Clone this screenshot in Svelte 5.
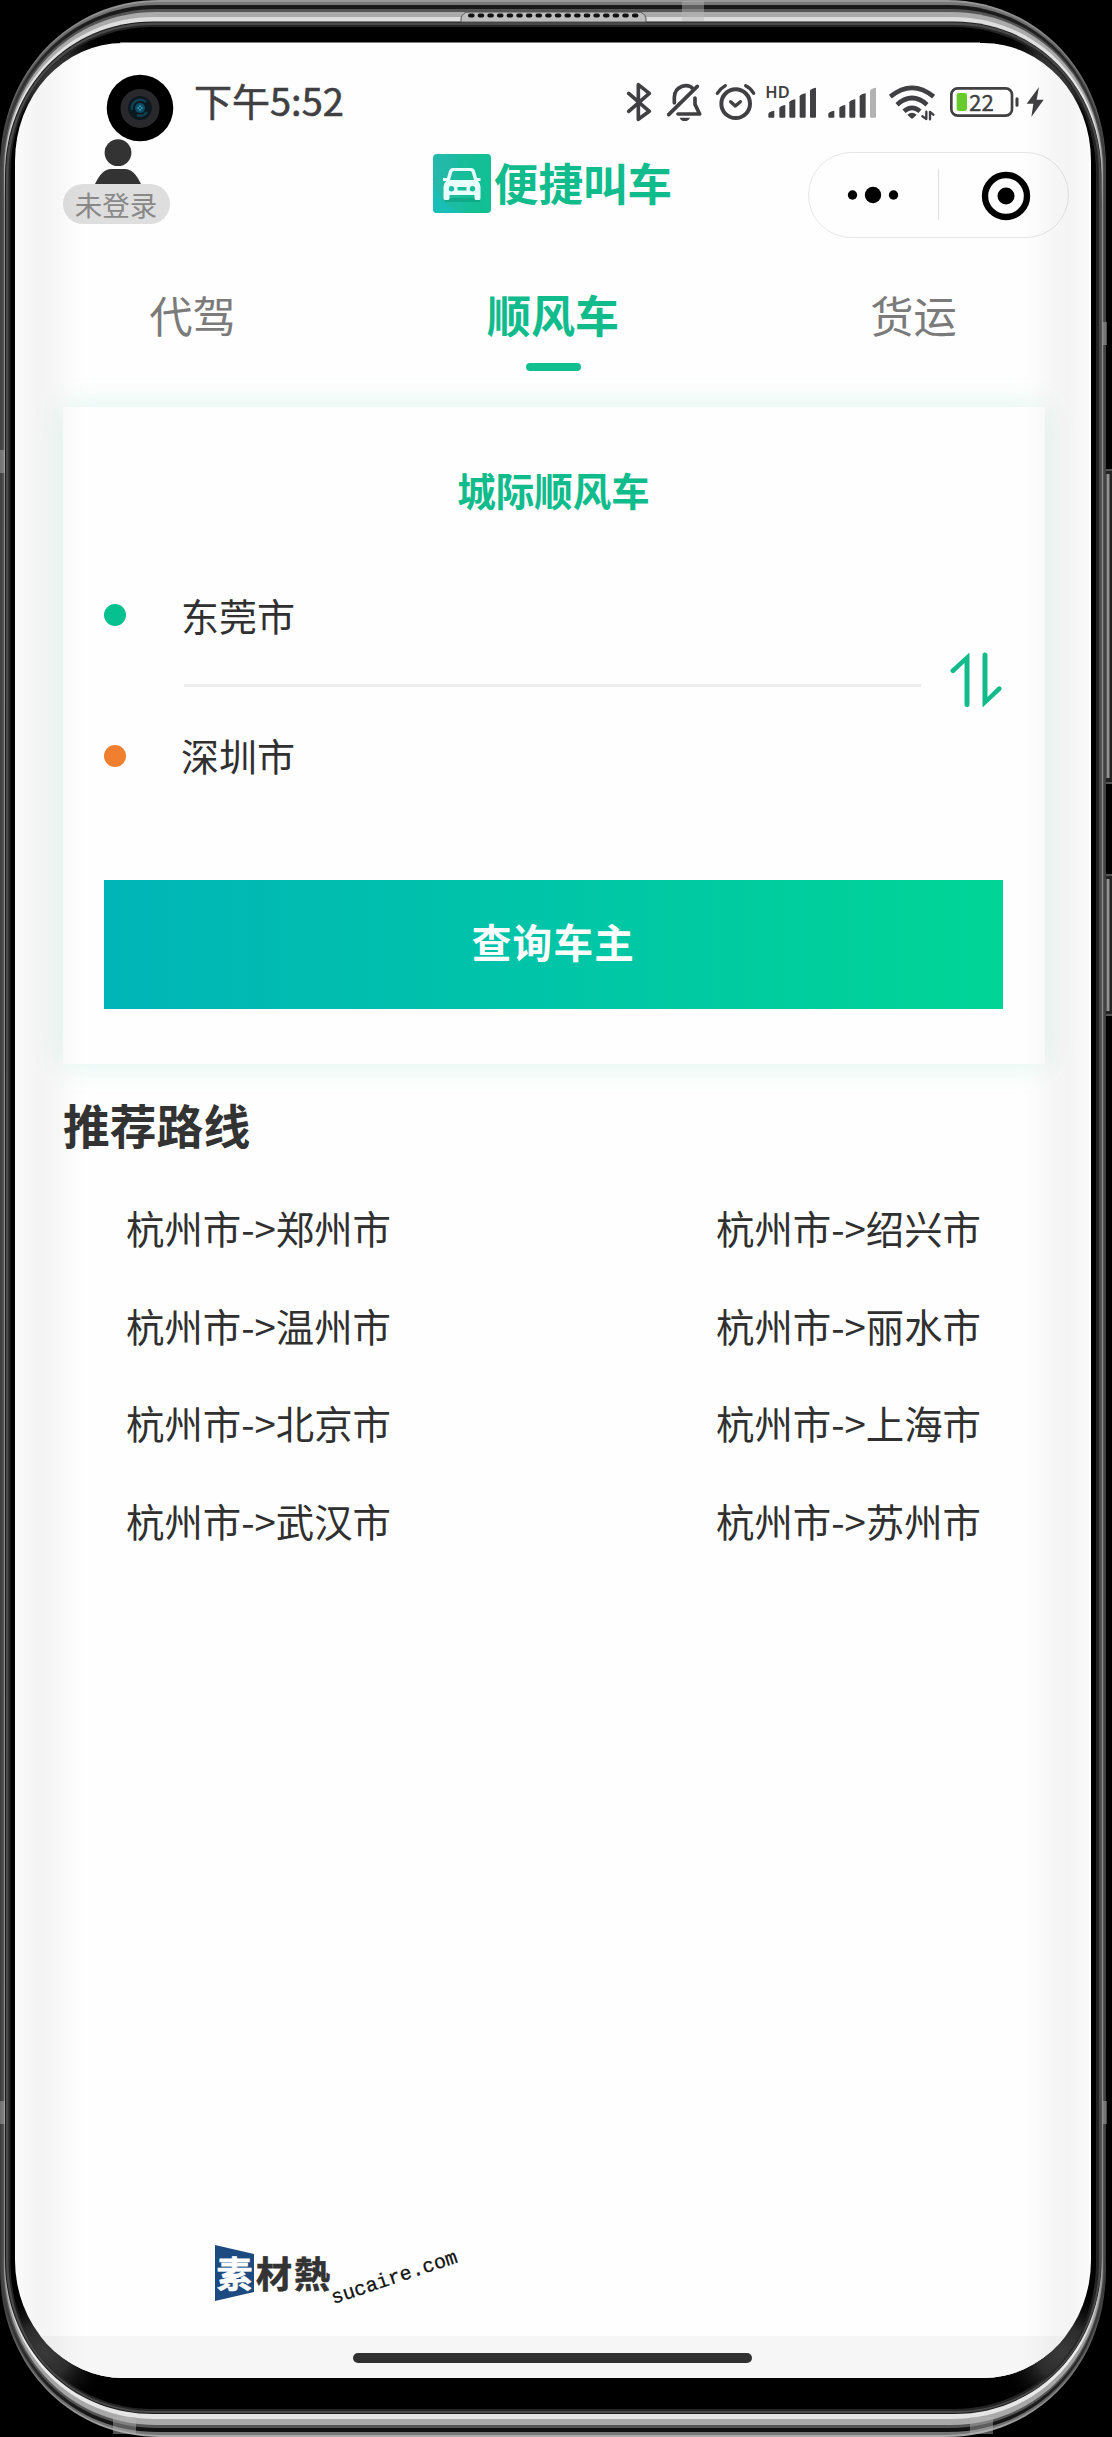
<script>
  const tabs = ['代驾', '顺风车', '货运'];
  let active = $state(1);
  let from = $state('东莞市');
  let to = $state('深圳市');
  const routes = ['郑州市', '绍兴市', '温州市', '丽水市', '北京市', '上海市', '武汉市', '苏州市'];

  function swap() {
    [from, to] = [to, from];
  }

  // Rounded outline with slightly squared-off elliptical corners.
  function shell(x0, y0, x1, y1, rx, ry) {
    const k = 0.43;
    return `M${x0 + rx} ${y0}H${x1 - rx}C${x1 - rx * k} ${y0} ${x1} ${y0 + ry * k} ${x1} ${y0 + ry}V${y1 - ry}` +
      `C${x1} ${y1 - ry * k} ${x1 - rx * k} ${y1} ${x1 - rx} ${y1}H${x0 + rx}` +
      `C${x0 + rx * k} ${y1} ${x0} ${y1 - ry * k} ${x0} ${y1 - ry}V${y0 + ry}C${x0} ${y0 + ry * k} ${x0 + rx * k} ${y0} ${x0 + rx} ${y0}Z`;
  }

  const layers = [
    [shell(0, 0, 1106, 2437, 160, 168), 'url(#rim)'],
    [shell(0.5, 2, 1105.5, 2435, 159, 167), 'url(#rim2)'],
    [shell(1.5, 5, 1104.5, 2432, 156, 164), 'url(#groove)'],
    [shell(3, 9, 1103.5, 2428, 154, 162), 'url(#mid)'],
    [shell(4, 12, 1103, 2425, 152, 160), 'url(#shine)'],
    [shell(4.5, 17, 1102.3, 2419, 150, 157), 'url(#shine2)'],
    [shell(5, 21.5, 1101.5, 2414, 148, 154), '#1c1c1c'],
    [shell(6, 22.5, 1101, 2413, 147, 153), '#4a4a4a'],
    [shell(8.5, 25, 1099, 2411, 144, 150), '#242424'],
    [shell(10.5, 27, 1096, 2409, 142, 147), '#000'],
  ];
  const inner = shell(8.5, 27, 1098, 2409, 143, 148);
  const corners = [[44, 68], [1062, 68], [44, 2352], [1062, 2352]];
  const bars = [[505, 122], [538, 105], [568, 88], [599, 70], [630, 53]];
</script>

<main class="phone">
  <svg class="frame" width="1112" height="2437" viewBox="0 0 1112 2437" aria-hidden="true">
    <defs>
      <linearGradient id="rim" x1="0" x2="0" y1="0" y2="1">
        <stop offset="0" stop-color="#999" /><stop offset="0.06" stop-color="#4a4a4a" />
        <stop offset="0.94" stop-color="#3c3c3c" /><stop offset="1" stop-color="#aaa" />
      </linearGradient>
      <linearGradient id="rim2" x1="0" x2="0" y1="0" y2="1">
        <stop offset="0" stop-color="#777" /><stop offset="0.06" stop-color="#3a3a3a" />
        <stop offset="0.94" stop-color="#3a3a3a" /><stop offset="1" stop-color="#777" />
      </linearGradient>
      <linearGradient id="groove" x1="0" x2="0" y1="0" y2="1">
        <stop offset="0" stop-color="#181818" /><stop offset="0.07" stop-color="#4c4c4c" />
        <stop offset="0.93" stop-color="#4c4c4c" /><stop offset="1" stop-color="#111" />
      </linearGradient>
      <linearGradient id="mid" x1="0" x2="0" y1="0" y2="1">
        <stop offset="0" stop-color="#555" /><stop offset="1" stop-color="#555" />
      </linearGradient>
      <linearGradient id="shine" x1="0" x2="0" y1="0" y2="1">
        <stop offset="0" stop-color="#aaa" /><stop offset="0.05" stop-color="#aaa" />
        <stop offset="0.08" stop-color="#929292" /><stop offset="0.93" stop-color="#929292" />
        <stop offset="1" stop-color="#aaa" />
      </linearGradient>
      <linearGradient id="shine2" x1="0" x2="0" y1="0" y2="1">
        <stop offset="0" stop-color="#ddd" /><stop offset="0.04" stop-color="#e8e8e8" />
        <stop offset="0.08" stop-color="#888" /><stop offset="0.93" stop-color="#888" />
        <stop offset="0.97" stop-color="#eee" /><stop offset="1" stop-color="#e4e4e4" />
      </linearGradient>
      <radialGradient id="glow">
        <stop offset="0" stop-color="#3a3a3a" /><stop offset="0.4" stop-color="#2c2c2c" />
        <stop offset="1" stop-color="#000" stop-opacity="0" />
      </radialGradient>
      <clipPath id="bezel"><path d={inner} /></clipPath>
    </defs>
    <g fill="#222" stroke="#555" stroke-width="2">
      <rect x="1100" y="470" width="18" height="313" rx="5" />
      <rect x="1100" y="875" width="18" height="140" rx="5" />
    </g>
    <path d="M1108 474V778M1108 879V1011" stroke="#929292" stroke-width="3" />
    {#each layers as [d, fill]}
      <path {d} {fill} />
    {/each}
    <g clip-path="url(#bezel)">
      {#each corners as [cx, cy]}
        <circle {cx} {cy} r="66" fill="url(#glow)" />
      {/each}
    </g>
    <path d="M461 22v-4q2-6 8-6h169q6 0 8 6v4z" fill="#bdbdbd" stroke="#555" />
    <path d="M470 15.5H640" stroke="#111" stroke-width="4" stroke-linecap="round" stroke-dasharray="2.6 7.04" />
    <g fill="#b5b5b5" opacity="0.45">
      <rect x="682" y="1" width="22" height="20" />
      <rect x="0" y="450" width="5" height="23" />
      <rect x="0" y="2101" width="5" height="23" />
      <rect x="1103" y="322" width="4" height="23" />
      <rect x="1103" y="2101" width="4" height="23" />
      <rect x="113" y="2417" width="23" height="17" />
      <rect x="970" y="2417" width="23" height="17" />
    </g>
    <path d="M120 42.5H980" stroke="#808080" />
  </svg>

  <div class="screen">
    <div class="status">
      <span class="time">下午5:52</span>
      <svg width="470" height="70" viewBox="0 0 1410 210" fill="none" stroke="#404042" stroke-linecap="round" stroke-linejoin="round">
        <path d="M86 70 148 124 115 148V44L148 70 86 124" stroke-width="11" />
        <path d="M223 98V82C224 48 262 38 279 56M206 134 292 49M285 84V103L299 132H234" stroke-width="11" />
        <path d="M239 143H270Q266 153 254 153T239 143Z" fill="#404042" stroke="none" />
        <circle cx="407" cy="101" r="43" stroke-width="12" />
        <path d="M352 70Q362 55 376 47M437 47Q453 55 461 70" stroke-width="10" />
        <path d="M392 95 406 108 421 95" stroke-width="10" />
        <text class="hd" x="496" y="84" textLength="73" lengthAdjust="spacingAndGlyphs">HD</text>
        {#each bars as [x, y]}
          <path d="M{x} {y + 9}Q{x + 2} {y + 3} {x + 18} {y}V140Q{x + 18} 143 {x + 15} 143H{x + 3}Q{x} 143 {x} 140Z" fill="#404042" stroke="none" />
        {/each}
        {#each bars as [x, y], i}
          <path d="M{x + 180} {y + 9}Q{x + 182} {y + 3} {x + 198} {y}V140Q{x + 198} 143 {x + 195} 143H{x + 183}Q{x + 180} 143 {x + 180} 140Z" fill={i === 4 ? '#b2b2b2' : '#404042'} stroke="none" />
        {/each}
        <path d="M871 80Q936 27 1001 80M891 104Q936 64 981 104" stroke-width="14" stroke-linecap="butt" />
        <path d="M912 124Q936 103 960 124" stroke-width="14" stroke-linecap="butt" />
        <path d="M922 134Q936 122 950 134L940 144Q936 147 932 144Z" fill="#404042" stroke="none" />
        <path d="M979 125V147L967 139M990 148V126L1000 134" stroke-width="7" />
        <rect x="1054" y="55" width="182" height="82" rx="19" stroke-width="8" />
        <rect x="1070" y="69" width="31" height="54" rx="7" fill="#66cb2b" stroke="none" />
        <text class="level" x="1107" y="122">22</text>
        <path d="M1251 86V106" stroke-width="9" />
        <path d="M1317 51 1280 101H1300L1294 141 1331 89H1310Z" fill="#404042" stroke="none" />
      </svg>
    </div>

    <header>
      <div class="user">
        <svg width="46" height="45" viewBox="0 0 46 45" fill="#333">
          <circle cx="23" cy="13.7" r="13.4" />
          <path d="M0 45Q7 30 16 30H30Q39 30 46 45Z" />
        </svg>
        <span class="badge">未登录</span>
      </div>
      <div class="brand">
        <svg width="58" height="59" viewBox="0 0 58 59">
          <defs>
            <linearGradient id="tile" x1="0" x2="1" y1="0.2" y2="0.4">
              <stop offset="0" stop-color="#25b8ac" /><stop offset="1" stop-color="#12c196" />
            </linearGradient>
          </defs>
          <rect width="58" height="59" rx="4" fill="url(#tile)" />
          <path d="M0 30Q8 52 30 59H4Q0 59 0 55Z" fill="#19bfb6" />
          <path d="M26 0Q18 24 34 59H54Q58 59 58 55V4Q58 0 54 0Z" fill="#12be90" opacity="0.45" />
          <path d="M12 44H47V48H12Z" fill="#0b9d7d" opacity="0.6" />
          <path fill-rule="evenodd" fill="#e9fffb" d="M20 14H38Q41 14 42 17L44 24H47.500V27H45Q47.500 30 47.500 33V44Q47.500 46 46 46H43Q41.500 46 41.500 44V41H16.500V44Q16.500 46 15 46H12Q10.500 46 10.500 44V33Q10.500 30 13 27H10V24H14L16 17Q17 14 20 14ZM20.500 17Q19.500 17 19 19L17 26H41L39 19Q38.500 17 37.500 17ZM18.500 32A2.700 2.700 0 1 0 18.500 37.400 2.700 2.700 0 1 0 18.500 32ZM39.500 32A2.700 2.700 0 1 0 39.500 37.400 2.700 2.700 0 1 0 39.500 32ZM24.500 33V36.500H33.500V33Z" />
        </svg>
        <span>便捷叫车</span>
      </div>
      <div class="capsule">
        <svg width="259" height="84" viewBox="0 0 259 84">
          <circle cx="43.500" cy="42" r="4.700" />
          <circle cx="64" cy="42" r="8.200" />
          <circle cx="84.500" cy="42" r="4.700" />
          <path d="M129.500 16V67" stroke="#dedede" />
          <circle cx="197" cy="43" r="21" fill="none" stroke="#000" stroke-width="6.400" />
          <circle cx="197" cy="43" r="8.500" />
        </svg>
      </div>
    </header>

    <nav>
      {#each tabs as tab, i}
        <button class="tab" class:active={i === active} onclick={() => (active = i)}>{tab}</button>
      {/each}
    </nav>

    <section class="card">
      <h2>城际顺风车</h2>
      <div class="route">
        <div class="stops">
          <div class="stop first"><i></i><span>{from}</span></div>
          <div class="line"></div>
          <div class="stop last"><i></i><span>{to}</span></div>
        </div>
        <button class="swap" aria-label="交换" onclick={swap}>
          <svg width="52" height="56" viewBox="0 0 52 56" fill="#12bb8c">
            <path d="M19.500 .5V52.500A2.200 2.200 0 0 1 14.500 52.500V11L4.500 20.500A2.300 2.300 0 0 1 1.300 17Z" />
            <path d="M32.500 55.500V3A2.200 2.200 0 0 1 37.500 3V45L47.500 35A2.300 2.300 0 0 1 50.800 38.500Z" />
          </svg>
        </button>
      </div>
      <button class="query">查询车主</button>
    </section>

    <h3>推荐路线</h3>
    <div class="routes">
      {#each routes as city}
        <span>杭州市-&gt;{city}</span>
      {/each}
    </div>

    <svg class="mark" width="256" height="70" viewBox="0 0 256 70">
      <path d="M0 5 39 14V52L0 61Z" fill="#1d4a80" />
      <text class="mark-cn" x="1.500" y="47.500" fill="#fff" stroke="#fff">素</text>
      <text class="mark-cn" x="41 79" y="47.500" fill="#333" stroke="#333">材熱</text>
      <text class="mark-url" x="0" y="0" transform="translate(118.500 64) rotate(-18.500)">sucaire.com</text>
    </svg>
    <footer><div></div></footer>
    <div class="edges"></div>
  </div>

  <svg class="camera" width="68" height="68" viewBox="0 0 68 68" aria-hidden="true">
    <circle cx="34" cy="34" r="33.300" />
    <circle cx="34" cy="34.500" r="19.500" fill="#29292b" />
    <circle cx="34" cy="34" r="12" fill="#0b1820" />
    <path d="M26 36A8.500 8.500 0 0 1 40 28M41 38A8 8 0 0 1 31 41" fill="none" stroke="#103f52" stroke-width="2.500" />
    <circle cx="34" cy="34" r="5" fill="#0b4f68" />
    <path d="M31.500 34H36.500M34 31.500V36.500" stroke="#70d9ec" stroke-width="1" stroke-dasharray="1.500 2" />
  </svg>
</main>

<style>
  :global(body) {
    margin: 0;
    background: #000;
  }
  .phone {
    position: relative;
    width: 1112px;
    height: 2437px;
    box-sizing: border-box;
    padding: 43px 21px 59px 15px;
    overflow: hidden;
    background: #000;
    color: #303030;
    font-family: 'Noto Sans CJK SC', 'Noto Sans', sans-serif;
  }
  svg {
    display: block;
    flex: none;
  }
  .frame {
    position: absolute;
    left: 0;
    top: 0;
  }
  .camera {
    position: absolute;
    left: 106px;
    top: 74px;
  }
  .screen {
    position: relative;
    display: flex;
    flex-direction: column;
    width: 1076px;
    height: 2335px;
    border-radius: 108px / 118px;
    overflow: hidden;
    background: #fefefe;
  }
  .edges {
    position: absolute;
    inset: 0;
    pointer-events: none;
    background:
      linear-gradient(90deg, rgba(0, 0, 0, 0.01), rgba(0, 0, 0, 0.04) 22px, rgba(0, 0, 0, 0.03) 40px, rgba(0, 0, 0, 0.008) 58px, transparent 72px),
      linear-gradient(270deg, rgba(0, 0, 0, 0.01), rgba(0, 0, 0, 0.04) 22px, rgba(0, 0, 0, 0.03) 40px, rgba(0, 0, 0, 0.008) 58px, transparent 72px);
  }
  button {
    border: 0;
    padding: 0;
    background: none;
    font: inherit;
    color: inherit;
  }
  .status {
    display: flex;
    justify-content: space-between;
    align-items: flex-start;
    height: 96px;
    box-sizing: border-box;
    padding: 27px 21px 0 179px;
    flex: none;
  }
  .time {
    font-size: 38px;
    line-height: 60px;
    font-weight: 400;
    color: #404042;
    -webkit-text-stroke: 0.6px #404042;
  }
  .hd {
    font: 600 46px 'Noto Sans', sans-serif;
    fill: #404042;
    stroke: none;
  }
  .level {
    font: 400 67px 'Noto Sans CJK SC', sans-serif;
    fill: #404042;
    stroke: #404042;
    stroke-width: 1px;
  }
  header {
    display: flex;
    align-items: flex-start;
    justify-content: space-between;
    height: 120px;
    padding: 0 22px 0 48px;
    flex: none;
  }
  .user {
    display: flex;
    flex-direction: column;
    align-items: center;
    width: 107px;
  }
  .user svg {
    margin-left: 3px;
  }
  .badge {
    width: 107px;
    height: 40px;
    border-radius: 20px;
    background: #dedede;
    color: #888;
    font-size: 27.500px;
    line-height: 40px;
    text-align: center;
    text-indent: -1px;
  }
  .brand {
    display: flex;
    align-items: center;
    gap: 3px;
    margin: 15px 0 0 127px;
    color: #10bb8c;
    font-size: 44.600px;
    font-weight: 700;
    line-height: 56px;
  }
  .brand span {
    padding-bottom: 3px;
  }
  .capsule {
    margin-top: 13px;
    border: 1px solid #e6e6e6;
    border-radius: 43px;
  }
  nav {
    display: grid;
    grid-template-columns: 355px 366px 355px;
    height: 148px;
    box-sizing: border-box;
    padding-top: 25px;
    align-items: start;
    flex: none;
  }
  .tab {
    display: flex;
    flex-direction: column;
    align-items: center;
    font-size: 43.300px;
    line-height: 60px;
    color: #7b7b7b;
  }
  .tab.active {
    font-size: 44px;
    font-weight: 700;
    color: #10bb8c;
  }
  .tab.active::after {
    content: '';
    width: 55px;
    height: 8px;
    margin-top: 19px;
    border-radius: 4px;
    background: #0fbf90;
  }
  .card {
    height: 657px;
    box-sizing: border-box;
    margin: 0 46px 0 48px;
    padding: 57px 42px 0 41px;
    background: #fefefe;
    box-shadow: 0 0 30px rgba(5, 192, 145, 0.14);
    flex: none;
  }
  h2 {
    margin: 0 0 36px;
    font-size: 38.500px;
    line-height: 50px;
    text-align: center;
    color: #10bb8c;
  }
  .route {
    display: flex;
    justify-content: space-between;
    align-items: center;
    height: 277px;
  }
  .stops {
    width: 817px;
  }
  .stop {
    display: flex;
    align-items: center;
    gap: 55px;
    height: 134px;
    font-size: 38px;
  }
  .stop span {
    padding-bottom: 5px;
  }
  .stop.last {
    height: 140px;
  }
  .stop i {
    width: 22px;
    height: 22px;
    margin-bottom: 4px;
    border-radius: 50%;
    background: #05c08f;
  }
  .stop.last i {
    margin-bottom: 3px;
    background: #f08030;
  }
  .line {
    height: 3px;
    margin-left: 80px;
    background: #eee;
  }
  .swap {
    margin: 0 1px 18px 0;
  }
  .query {
    display: block;
    width: 100%;
    height: 129px;
    margin-top: 53px;
    background: linear-gradient(90deg, #00b5b8, #00d596);
    color: #fff;
    font-size: 39.600px;
    font-weight: 700;
    letter-spacing: 1.300px;
    line-height: 121px;
    padding-bottom: 8px;
  }
  h3 {
    margin: 30px 0 25px 48px;
    font-size: 46.800px;
    line-height: 60px;
    color: #333;
  }
  .routes {
    display: grid;
    grid-template-columns: 590px 1fr;
    grid-auto-rows: 97.500px;
    padding-left: 111px;
    font-size: 38.400px;
    line-height: 97.500px;
  }
  .mark {
    margin: auto 0 26px 200px;
  }
  .mark-cn {
    font: 700 36px 'Noto Sans CJK TC', sans-serif;
    stroke-width: 0.600px;
  }
  .mark-url {
    font: 400 20px 'Liberation Mono', monospace;
    fill: #111;
    stroke: #111;
    stroke-width: 0.300px;
  }
  footer {
    display: flex;
    justify-content: center;
    height: 42px;
    box-sizing: border-box;
    padding: 17px 1px 0 0;
    background: #f6f6f6;
    flex: none;
  }
  footer div {
    width: 399px;
    height: 10px;
    border-radius: 5px;
    background: #303030;
  }
</style>
